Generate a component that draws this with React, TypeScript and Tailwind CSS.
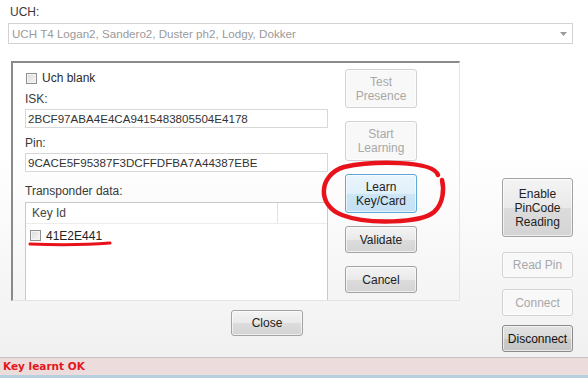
import React from 'react'

type BtnKind = 'normal' | 'disabled' | 'focused' | 'pressed'

function WinButton({ label, kind = 'normal', className = '' }: { label: React.ReactNode; kind?: BtnKind; className?: string }) {
  const styles: Record<BtnKind, string> = {
    normal: 'border-[#a3a3a3] bg-[linear-gradient(#f4f4f4_0%,#e9e9e9_50%,#dcdcdc_51%,#d4d4d4_100%)] text-[#222]',
    disabled: 'border-[#d2d2d2] bg-[#f8f8f8] text-[#a8a8a8]',
    focused: 'border-[#5ea9d8] bg-[linear-gradient(#eaf5fc_0%,#e0f0fa_50%,#cde6f6_51%,#c4e0f3_100%)] text-[#222]',
    pressed: 'border-[#8b8b8b] bg-[linear-gradient(#e2e2e2_0%,#d9d9d9_50%,#cbcbcb_51%,#c4c4c4_100%)] text-[#111]',
  }
  return (
    <div
      className={`flex items-center justify-center rounded-[3px] border text-center text-[12px] leading-[14px] shadow-[inset_0_0_0_1px_rgba(255,255,255,0.6)] ${styles[kind]} ${className}`}
    >
      {label}
    </div>
  )
}

function CheckBox({ className = '' }: { className?: string }) {
  return (
    <span
      className={`inline-block h-[11px] w-[11px] border border-[#8e8f8f] bg-[linear-gradient(135deg,#dcdcdc,#f6f6f6)] shadow-[inset_0_0_0_1px_#f4f4f4] ${className}`}
    />
  )
}

export default function App() {
  return (
    <div
      className="relative flex h-[378px] w-[588px] flex-col overflow-hidden bg-[linear-gradient(#ffffff_0%,#ffffff_40%,#efefef_100%)] text-[#3a3a3a]"
      style={{ fontFamily: '"Liberation Sans", Arial, sans-serif' }}
    >
      {/* UCH selector */}
      <div className="ml-[10px] mt-[5px] h-[14px] text-[12px] leading-[14px]">UCH:</div>
      <div className="ml-[8px] mt-[4px] flex h-[21px] w-[565px] items-center justify-between border border-[#d3d3d3] bg-white pl-[3px] pr-[5px] text-[11.6px] text-[#9a9a9a]">
        <span>UCH T4 Logan2, Sandero2, Duster ph2, Lodgy, Dokker</span>
        <svg width="7" height="4" viewBox="0 0 7 4">
          <path d="M0 0 H7 L3.5 4 Z" fill="#9a9a9a" />
        </svg>
      </div>

      {/* Main area */}
      <div className="mt-[17px] flex">
        <div className="ml-[11px] flex flex-col">
          {/* Panel */}
          <div className="flex h-[240px] w-[449px] border-l-2 border-t-2 border-b border-r border-l-[#8a8a8a] border-t-[#8a8a8a] border-b-[#e4e4e4] border-r-[#e4e4e4]">
            <div className="ml-[12px] flex w-[303px] flex-col">
              <div className="mt-[8px] flex h-[14px] items-center gap-[5px] text-[12px]">
                <CheckBox className="ml-[1px]" />
                <span className="text-[#2a2a2a]">Uch blank</span>
              </div>
              <div className="mt-[7px] h-[14px] text-[12px] leading-[14px]">ISK:</div>
              <div className="mt-[3px] flex h-[19px] items-center border border-[#d8d8d8] bg-white pl-[2px] text-[11.6px] text-[#333]">
                2BCF97ABA4E4CA9415483805504E4178
              </div>
              <div className="mt-[8px] h-[14px] text-[12px] leading-[14px]">Pin:</div>
              <div className="mt-[3px] flex h-[19px] items-center border border-[#d8d8d8] bg-white pl-[2px] text-[11.6px] text-[#333]">
                9CACE5F95387F3DCFFDFBA7A44387EBE
              </div>
              <div className="mt-[12px] h-[14px] text-[12px] leading-[14px]">Transponder data:</div>
              <div className="mt-[4px] flex flex-1 flex-col border-l border-r border-t border-[#c9c9c9] bg-white">
                <div className="flex h-[21px] border-b border-[#ececec]">
                  <div className="flex w-[252px] items-center border-r border-[#e2e2e2] pl-[6px] text-[12px] text-[#444]">Key Id</div>
                </div>
                <div className="mt-[5px] flex h-[13px] items-center gap-[5px] pl-[4px] text-[12px] text-[#222]">
                  <CheckBox />
                  <span>41E2E441</span>
                </div>
              </div>
            </div>

            <div className="ml-[17px] mt-[6px] flex w-[72px] flex-col gap-[13px]">
              <WinButton kind="disabled" className="h-[39px]" label={<>Test<br />Presence</>} />
              <WinButton kind="disabled" className="h-[40px]" label={<>Start<br />Learning</>} />
              <WinButton kind="focused" className="h-[39px]" label={<>Learn<br />Key/Card</>} />
              <WinButton className="h-[27px]" label="Validate" />
              <WinButton className="h-[27px]" label="Cancel" />
            </div>
          </div>

          <WinButton className="ml-[220px] mt-[9px] h-[26px] w-[72px]" label="Close" />
        </div>

        {/* Right column */}
        <div className="ml-[42px] mt-[117px] flex w-[71px] flex-col">
          <WinButton className="h-[59px]" label={<>Enable<br />PinCode<br />Reading</>} />
          <WinButton kind="disabled" className="mt-[15px] h-[26px]" label="Read Pin" />
          <WinButton kind="disabled" className="mt-[11px] h-[27px]" label="Connect" />
          <WinButton kind="pressed" className="mt-[9px] h-[27px]" label="Disconnect" />
        </div>
      </div>

      {/* Status bar */}
      <div className="mt-auto flex h-[21px] flex-col border-t border-[#c4c4c4]">
        <div className="flex flex-1 items-center bg-[#eddcdc] pl-[3px]">
          <span
            className="text-[10.5px] font-bold text-[#e3161c]"
            style={{ fontFamily: '"DejaVu Sans", Verdana, sans-serif' }}
          >
            Key learnt OK
          </span>
        </div>
        <div className="h-[3px] bg-[#b6d0de]" />
      </div>

      {/* Hand-drawn annotations */}
      <svg className="pointer-events-none absolute left-0 top-0" width="588" height="378" viewBox="0 0 588 378">
        <path
          d="M438 175 C433 160, 372 161, 344 167 C318 175, 317 206, 342 215 C368 225, 421 223, 434 212 C444 203, 444 188, 442 180"
          fill="none"
          stroke="#e8121b"
          strokeWidth="4.5"
          strokeLinecap="round"
        />
        <path d="M30 244 C55 245, 85 245, 110 243" fill="none" stroke="#e8121b" strokeWidth="3" strokeLinecap="round" />
      </svg>
    </div>
  )
}
